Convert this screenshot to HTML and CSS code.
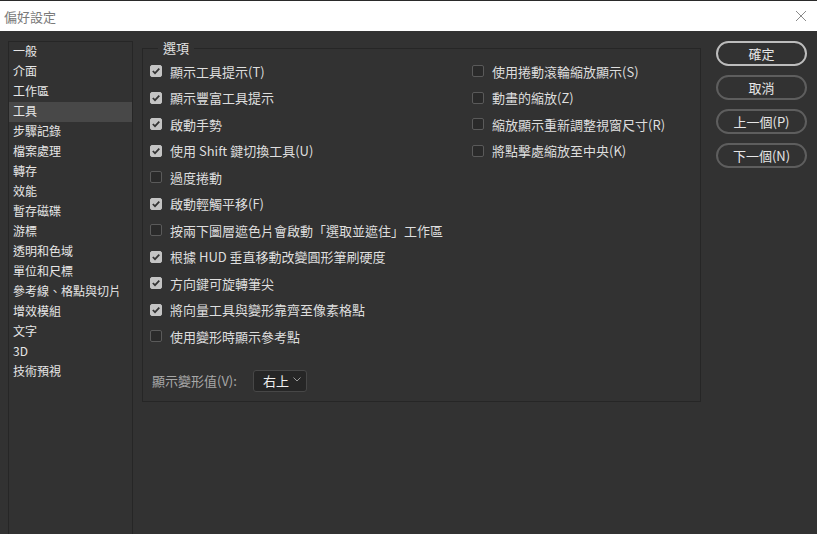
FILE: index.html
```html
<!DOCTYPE html>
<html lang="zh-Hant">
<head>
<meta charset="utf-8">
<title>偏好設定</title>
<link rel="stylesheet" href="styles.css">
</head>
<body>
<div class="titlebar">
  <span class="title">偏好設定</span>
  <svg class="close" width="12" height="12" viewBox="0 0 12 12"><path d="M1 1 L11 11 M11 1 L1 11" stroke="#8a8a8a" stroke-width="1" fill="none"/></svg>
</div>
<div class="main">
  <ul class="sidebar">
    <li>一般</li>
    <li>介面</li>
    <li>工作區</li>
    <li class="active">工具</li>
    <li>步驟記錄</li>
    <li>檔案處理</li>
    <li>轉存</li>
    <li>效能</li>
    <li>暫存磁碟</li>
    <li>游標</li>
    <li>透明和色域</li>
    <li>單位和尺標</li>
    <li>參考線、格點與切片</li>
    <li>增效模組</li>
    <li>文字</li>
    <li>3D</li>
    <li>技術預視</li>
  </ul>
  <fieldset class="group">
    <legend>選項</legend>
    <div class="cols">
      <div class="col left">
        <div class="row"><span class="cb on"></span>顯示工具提示(T)</div>
        <div class="row"><span class="cb on"></span>顯示豐富工具提示</div>
        <div class="row"><span class="cb on"></span>啟動手勢</div>
        <div class="row"><span class="cb on"></span>使用 Shift 鍵切換工具(U)</div>
        <div class="row"><span class="cb"></span>過度捲動</div>
        <div class="row"><span class="cb on"></span>啟動輕觸平移(F)</div>
        <div class="row"><span class="cb"></span>按兩下圖層遮色片會啟動「選取並遮住」工作區</div>
        <div class="row"><span class="cb on"></span>根據 HUD 垂直移動改變圓形筆刷硬度</div>
        <div class="row"><span class="cb on"></span>方向鍵可旋轉筆尖</div>
        <div class="row"><span class="cb on"></span>將向量工具與變形靠齊至像素格點</div>
        <div class="row"><span class="cb"></span>使用變形時顯示參考點</div>
      </div>
      <div class="col right">
        <div class="row"><span class="cb"></span>使用捲動滾輪縮放顯示(S)</div>
        <div class="row"><span class="cb"></span>動畫的縮放(Z)</div>
        <div class="row"><span class="cb"></span>縮放顯示重新調整視窗尺寸(R)</div>
        <div class="row"><span class="cb"></span>將點擊處縮放至中央(K)</div>
      </div>
    </div>
    <div class="selectrow">
      <span class="label">顯示變形值(V):</span>
      <span class="select">右上<svg class="chev" width="8" height="5" viewBox="0 0 8 5"><path d="M0.5 0.5 L4 4 L7.5 0.5" stroke="#9a9a9a" stroke-width="1" fill="none"/></svg></span>
    </div>
  </fieldset>
  <div class="buttons">
    <button class="btn primary">確定</button>
    <button class="btn">取消</button>
    <button class="btn">上一個(P)</button>
    <button class="btn">下一個(N)</button>
  </div>
</div>
</body>
</html>
```
FILE: styles.css
```css
html, body {
  margin: 0;
  padding: 0;
  height: 100%;
  overflow: hidden;
}
body {
  background: #323232;
  font-family: "Noto Sans CJK TC", "Noto Sans", sans-serif;
  font-size: 13px;
  color: #dcdcdc;
  border-top: 1px solid #2a2a2a;
  box-sizing: border-box;
}
.titlebar {
  height: 30px;
  background: #ffffff;
  display: flex;
  align-items: center;
  justify-content: space-between;
  padding: 0 10px 0 4px;
}
.title {
  color: #7a7a7a;
  font-size: 13px;
}
.main {
  display: flex;
  align-items: flex-start;
  padding-top: 10px;
  height: calc(100% - 30px);
  box-sizing: border-box;
}
.sidebar {
  list-style: none;
  margin: 0 0 0 8px;
  padding: 0;
  width: 123px;
  height: 510px;
  border: 1px solid #262626;
  flex: none;
  font-size: 12px;
}
.sidebar li {
  height: 20px;
  line-height: 17px;
  padding-left: 4px;
  color: #e6e6e6;
  white-space: nowrap;
}
.sidebar li.active {
  background: #484848;
}
.group {
  margin: 0 0 0 9px;
  padding: 0 0 0 7px;
  width: 559px;
  min-width: 0;
  height: 362px;
  box-sizing: border-box;
  border: 1px solid #262626;
  flex: none;
  position: relative;
  top: -1px;
}
.group legend {
  margin-left: 8px;
  padding: 0 5px 0 5px;
  color: #e2e2e2;
  line-height: 16px;
}
.cols {
  display: flex;
  margin-top: 2px;
}
.col.left {
  width: 322px;
  flex: none;
}
.row {
  height: 26.5px;
  display: flex;
  align-items: center;
  white-space: nowrap;
  color: #dedede;
}
.cb {
  width: 12px;
  height: 12px;
  box-sizing: border-box;
  border: 1px solid #5a5a5a;
  background: #2a2a2a;
  border-radius: 2px;
  margin-right: 8px;
  flex: none;
}
.cb.on {
  border-color: #c4c4c4;
  background: #c4c4c4 url("data:image/svg+xml;utf8,<svg xmlns='http://www.w3.org/2000/svg' width='10' height='10' viewBox='0 0 10 10'><path d='M1.8 5 L4 7.2 L8.3 2.6' stroke='%23333333' stroke-width='1.7' fill='none'/></svg>") center/10px 10px no-repeat;
}
.selectrow {
  display: flex;
  align-items: center;
  margin-top: 20px;
  padding-left: 2px;
}
.label {
  color: #a8a8a8;
  margin-right: 16px;
}
.select {
  width: 54px;
  height: 22px;
  box-sizing: border-box;
  background: #262626;
  border: 1px solid #474747;
  border-radius: 3px;
  display: flex;
  align-items: center;
  justify-content: space-between;
  padding: 0 5px 0 9px;
  color: #f0f0f0;
}
.chev {
  margin-top: -2px;
}
.buttons {
  display: flex;
  flex-direction: column;
  gap: 9px;
  margin-left: 15px;
  flex: none;
}
.btn {
  width: 91px;
  height: 25px;
  box-sizing: border-box;
  border-radius: 13px;
  border: 2px solid #5e5e5e;
  background: #323232;
  color: #e6e6e6;
  font-family: "Noto Sans CJK TC", "Noto Sans", sans-serif;
  font-size: 13px;
  padding: 0;
  line-height: 20px;
}
.btn.primary {
  border-color: #bdbdbd;
}
```
